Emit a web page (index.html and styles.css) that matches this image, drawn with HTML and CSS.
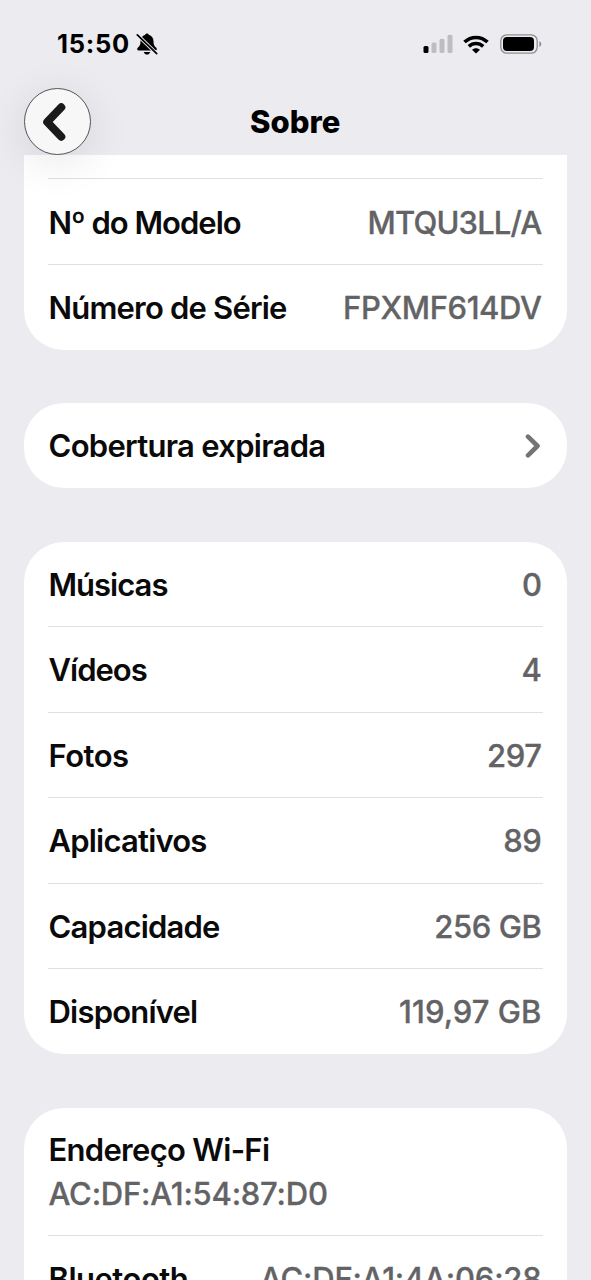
FILE: index.html
```html
<!DOCTYPE html>
<html lang="pt-BR">
<head>
<meta charset="utf-8">
<title>Sobre</title>
<link rel="stylesheet" href="styles.css">
</head>
<body>
<div class="screen">
  <header class="header">
    <div class="status">
      <div class="status-left">
        <span class="clock">15:50</span>
        <svg class="bell" width="22" height="22" viewBox="0 0 22 22">
          <path d="M11 .4c-.9 0-1.6.6-1.8 1.4C6.200 2.600 4.500 5.200 4.500 8.400c0 3.500-1 4.700-2.500 6.200-1.500 1.500-1 3 .8 3h16.400c1.800 0 2.300-1.500.8-3-1.500-1.500-2.500-2.700-2.500-6.200 0-3.200-1.700-5.800-4.700-6.600C12.600 1 11.900.4 11 .4zM7.800 19h6.400c-.3 1.500-1.600 2.600-3.200 2.600S8.100 20.500 7.800 19z" fill="#000"/>
          <path d="M1 1.500L21 21" stroke="#ebebf0" stroke-width="3.600"/>
          <path d="M1.300 1.800L20.700 20.700" stroke="#000" stroke-width="1.700" stroke-linecap="round"/>
        </svg>
      </div>
      <div class="status-right">
        <svg width="30" height="20" viewBox="0 0 30 20">
          <rect x="0.500" y="12" width="5" height="7" rx="1.500" fill="#000"/>
          <rect x="8.500" y="8.600" width="5" height="10.400" rx="1.500" fill="#bebec2"/>
          <rect x="16.500" y="4.800" width="5" height="14.200" rx="1.500" fill="#bebec2"/>
          <rect x="24.500" y="0.700" width="5" height="18.300" rx="1.500" fill="#bebec2"/>
        </svg>
        <svg class="wifi" width="26" height="19" viewBox="0 0 26 19">
          <g fill="none" stroke="#000" stroke-width="3.500">
            <path d="M1.500 7.100C8 .8 18 .8 24.500 7.100"/>
            <path d="M5.800 11.400c4.200-3.900 10.200-3.900 14.400 0"/>
          </g>
          <path d="M13 18.600L9 14.700c2.200-2.100 5.800-2.100 8 0z" fill="#000"/>
        </svg>
        <svg class="battery" width="42" height="20" viewBox="0 0 42 20">
          <rect x=".8" y=".8" width="36.400" height="18.400" rx="6" fill="none" stroke="#8e8e92" stroke-width="1.300"/>
          <rect x="3" y="3" width="31" height="14" rx="4" fill="#000"/>
          <path d="M39.300 7.200c2.600.8 2.600 4.800 0 5.600z" fill="#8e8e92"/>
        </svg>
      </div>
    </div>
    <div class="nav">
      <button class="back" aria-label="Voltar">
        <svg width="24" height="38" viewBox="0 0 24 38"><path d="M19.300 4.300L5.200 19 19.300 33.700" fill="none" stroke="#1a1a1a" stroke-width="8" stroke-linecap="round" stroke-linejoin="round"/></svg>
      </button>
      <h1 class="title">Sobre</h1>
    </div>
  </header>
  <main class="content">
    <section class="card card-cut">
      <div class="row row-cut"></div>
      <div class="row"><span class="label tight">Nº do Modelo</span><span class="value tighter">MTQU3LL/A</span></div>
      <div class="row"><span class="label">Número de Série</span><span class="value">FPXMF614DV</span></div>
    </section>
    <section class="card">
      <div class="row row-single"><span class="label loose">Cobertura expirada</span>
        <svg class="chevron" width="16" height="24" viewBox="0 0 16 24"><path d="M3 2.700L12.500 12 3 21.300" fill="none" stroke="#747476" stroke-width="4.600" stroke-linecap="round" stroke-linejoin="round"/></svg>
      </div>
    </section>
    <section class="card">
      <div class="row"><span class="label tight">Músicas</span><span class="value">0</span></div>
      <div class="row"><span class="label tight">Vídeos</span><span class="value">4</span></div>
      <div class="row"><span class="label looser">Fotos</span><span class="value">297</span></div>
      <div class="row"><span class="label">Aplicativos</span><span class="value">89</span></div>
      <div class="row"><span class="label">Capacidade</span><span class="value">256 GB</span></div>
      <div class="row"><span class="label">Disponível</span><span class="value wide">119,97 GB</span></div>
    </section>
    <section class="card">
      <div class="row row-stacked"><span class="label loose">Endereço Wi-Fi</span><span class="value address">AC:DF:A1:54:87:D0</span></div>
      <div class="row"><span class="label looser">Bluetooth</span><span class="value address">AC:DF:A1:4A:06:28</span></div>
    </section>
  </main>
</div>
</body>
</html>
```
FILE: styles.css
```css
* { box-sizing: border-box; }
body {
  margin: 0;
  background: #ebebf0;
  font-family: Inter, "Liberation Sans", sans-serif;
  color: #0a0a0a;
}
.screen {
  display: flex;
  flex-direction: column;
  width: 591px;
  height: 1280px;
  overflow: hidden;
}
.header {
  position: relative;
  z-index: 1;
  flex: none;
  height: 154.500px;
}
.status {
  display: flex;
  justify-content: space-between;
  align-items: center;
  height: 88px;
  padding: 0 49px 0 57px;
}
.status-left, .status-right { display: flex; align-items: center; }
.status-left { width: 101px; justify-content: space-between; }
.clock {
  font-size: 25.500px;
  line-height: 30px;
  font-weight: 750;
  color: #000;
  letter-spacing: .7px;
}
.bell { flex: none; }
.wifi { margin-left: 10px; }
.battery { margin-left: 11px; }
.nav {
  display: grid;
  grid-template-columns: 67px 1fr 67px;
  align-items: center;
  height: 67px;
  padding: 0 24px 0 23.500px;
}
.back {
  display: flex;
  align-items: center;
  justify-content: center;
  width: 67px;
  height: 67px;
  padding: 0 7px 0 0;
  border: 1px solid #55555a;
  border-radius: 50%;
  background: #f7f7f8;
  box-shadow: 0 8px 38px 6px rgba(0, 0, 0, .07);
}
.title {
  margin: 0;
  text-align: center;
  font-size: 31px;
  font-weight: 800;
  letter-spacing: .1px;
  color: #000;
}
.content {
  display: flex;
  flex-direction: column;
  gap: 53.500px;
  padding: 0 24.500px 0 24px;
}
.card {
  flex: none;
  padding: 0 24px;
  border-radius: 40px;
  background: #fff;
}
.card-cut { border-radius: 0 0 40px 40px; }
.row {
  display: flex;
  align-items: center;
  justify-content: space-between;
  height: 85.500px;
  padding: 2px 1px 0 .5px;
  border-bottom: 1px solid #e0e0e2;
  font-size: 31px;
  line-height: 44px;
  white-space: nowrap;
}
.row:last-child { height: 85px; padding-top: 1.500px; border-bottom: 0; }
.card-cut .row { padding-top: 2.500px; }
.card-cut .row-cut { height: 24.500px; }
.card .row-single { height: 85px; padding-top: 0; }
.row-stacked {
  flex-direction: column;
  align-items: flex-start;
  justify-content: center;
  height: 128px;
}
.label { font-weight: 600; letter-spacing: -.8px; }
.value {
  font-weight: 500;
  color: #636366;
  letter-spacing: -.4px;
  -webkit-text-stroke: .3px #636366;
}
.tight { letter-spacing: -1px; }
.loose { letter-spacing: -.7px; }
.looser { letter-spacing: -.5px; }
.tighter { letter-spacing: -.85px; }
.wide { letter-spacing: .05px; }
.address { letter-spacing: -.22px; }
.chevron { margin-right: .5px; }
```
